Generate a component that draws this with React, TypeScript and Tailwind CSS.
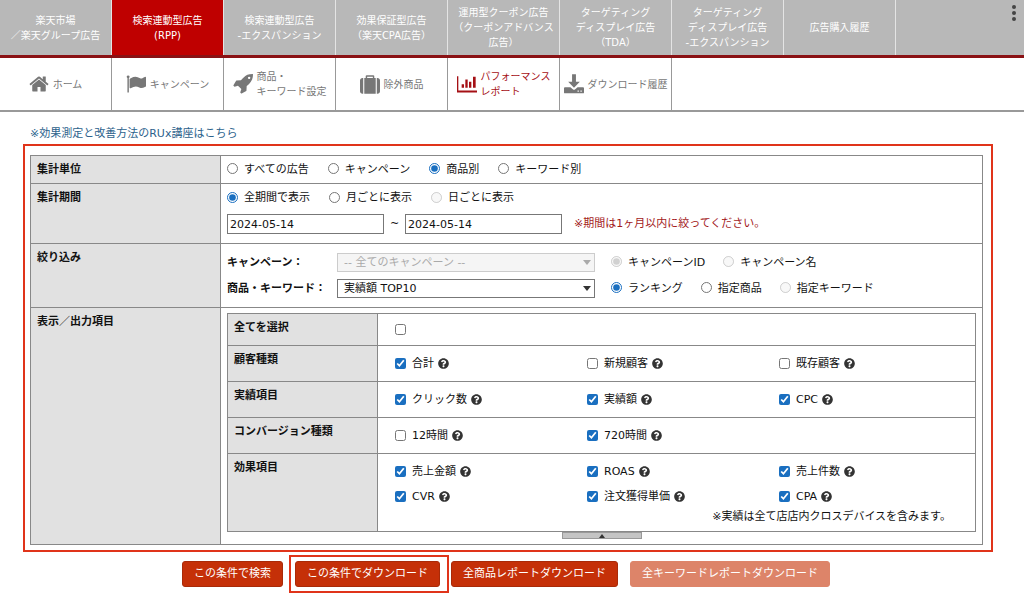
import React, { useState } from 'react';
import { FaQuestionCircle } from 'react-icons/fa';

const HomeIcon = () => (
  <svg viewBox="0 128 1664 1536" className="h-[18px] w-5 shrink-0" fill="currentColor">
    <path d="M1408 992v480q0 26-19 45t-45 19h-384v-384h-256v384h-384q-26 0-45-19t-19-45v-480q0-1 .5-3t.5-3l575-474 575 474q1 2 1 6zm223-69l-62 74q-8 9-21 11h-3q-13 0-21-7l-692-577-692 577q-12 8-24 7-13-2-21-11l-62-74q-8-10-7-23.5t11-21.5l719-599q32-26 76-26t76 26l244 204v-195q0-14 9-23t23-9h192q14 0 23 9t9 23v408l219 182q10 8 11 21.5t-7 23.5z" />
  </svg>
);

const FlagIcon = () => (
  <svg viewBox="0 0 1792 1792" className="size-5 shrink-0" fill="currentColor">
    <path d="M320 256q0 72-64 110v1266q0 13-9.5 22.5t-22.5 9.5h-64q-13 0-22.5-9.5t-9.5-22.5v-1266q-64-38-64-110 0-53 37.5-90.5t90.5-37.5 90.5 37.5 37.5 90.5zm1472 64v763q0 25-12.5 38.5t-39.5 27.5q-215 116-369 116-61 0-123.5-22t-108.5-48-115.5-48-142.5-22q-192 0-464 146-17 9-33 9-26 0-45-19t-19-45v-742q0-32 31-55 21-14 79-43 236-120 421-120 107 0 200 29t219 88q38 19 88 19 54 0 117.5-21t110-47 88-47 54.5-21q26 0 45 19t19 45z" />
  </svg>
);

const RocketIcon = () => (
  <svg viewBox="0 128 1664 1664" className="size-5 shrink-0" fill="currentColor">
    <path d="M1440 448q0-40-28-68t-68-28-68 28-28 68 28 68 68 28 68-28 28-68zm224-288q0 249-75.5 430.5t-253.5 360.5q-81 80-195 176l-20 379q-2 16-16 26l-384 224q-7 4-16 4-12 0-23-9l-64-64q-13-14-8-32l85-276-281-281-276 85q-3 1-9 1-14 0-23-9l-64-64q-17-19-5-39l224-384q10-14 26-16l379-20q96-114 176-195 188-187 358-258t431-71q14 0 24 9.5t10 22.5z" />
  </svg>
);

const SuitcaseIcon = () => (
  <svg viewBox="0 0 1792 1664" className="h-[19px] w-5 shrink-0" fill="currentColor">
    <path d="M640 256h512v-128h-512v128zm-352 0v1408h-64q-92 0-158-66t-66-158v-960q0-92 66-158t158-66h64zm1120 0v1408h-1024v-1408h128v-160q0-40 28-68t68-28h576q40 0 68 28t28 68v160h128zm384 224v960q0 92-66 158t-158 66h-64v-1408h64q92 0 158 66t66 158z" />
  </svg>
);

const ChartIcon = () => (
  <svg viewBox="0 0 60 50" className="h-[17px] w-5 shrink-0" fill="currentColor">
    <path d="M0 0h4v43h56v6H0zM14 24h7v11h-7zM25 10h7v25h-7zM36 17h7v18h-7zM48 2h8v33h-8z" />
  </svg>
);

const DownloadIcon = () => (
  <svg viewBox="0 0 62 60" className="size-5 shrink-0" fill="currentColor">
    <path d="M25 0h12v23h12L31 42 13 23h12z" />
    <path
      fillRule="evenodd"
      d="M3 40h17l8 7q3 2 6 0l8-7h17q3 0 3 3v13q0 3-3 3H3q-3 0-3-3V43q0-3 3-3zM42 50v4h4v-4zM51 50v4h4v-4z"
    />
  </svg>
);

const adTabs = [
  { lines: ['楽天市場', '／楽天グループ広告'] },
  { lines: ['検索連動型広告', '(RPP)'], active: true },
  { lines: ['検索連動型広告', '-エクスパンション'] },
  { lines: ['効果保証型広告', '（楽天CPA広告）'] },
  { lines: ['運用型クーポン広告', '（クーポンアドバンス', '広告）'] },
  { lines: ['ターゲティング', 'ディスプレイ広告', '（TDA）'] },
  { lines: ['ターゲティング', 'ディスプレイ広告', '-エクスパンション'] },
  { lines: ['広告購入履歴'] },
];

const menuItems = [
  { icon: HomeIcon, lines: ['ホーム'] },
  { icon: FlagIcon, lines: ['キャンペーン'] },
  { icon: RocketIcon, lines: ['商品・', 'キーワード設定'] },
  { icon: SuitcaseIcon, lines: ['除外商品'] },
  { icon: ChartIcon, lines: ['パフォーマンス', 'レポート'], active: true },
  { icon: DownloadIcon, lines: ['ダウンロード履歴'] },
];

const outputGroups = [
  {
    title: '顧客種類',
    items: [
      { label: '合計', checked: true },
      { label: '新規顧客', checked: false },
      { label: '既存顧客', checked: false },
    ],
  },
  {
    title: '実績項目',
    items: [
      { label: 'クリック数', checked: true },
      { label: '実績額', checked: true },
      { label: 'CPC', checked: true },
    ],
  },
  {
    title: 'コンバージョン種類',
    items: [
      { label: '12時間', checked: false },
      { label: '720時間', checked: true },
    ],
  },
  {
    title: '効果項目',
    items: [
      { label: '売上金額', checked: true },
      { label: 'ROAS', checked: true },
      { label: '売上件数', checked: true },
      { label: 'CVR', checked: true },
      { label: '注文獲得単価', checked: true },
      { label: 'CPA', checked: true },
    ],
    note: '※実績は全て店店内クロスデバイスを含みます。',
  },
];

const Radio = ({ name, label, checked, disabled }: any) => (
  <label className="flex items-center gap-1.5 whitespace-nowrap">
    <input
      type="radio"
      name={name}
      defaultChecked={checked}
      disabled={disabled}
      className="mb-0.5 size-[11px] accent-[#1a6fc0]"
    />
    {label}
  </label>
);

const Check = ({ label, checked }: any) => (
  <div className="flex items-center gap-1">
    <label className="flex items-center gap-1.5 whitespace-nowrap">
      <input type="checkbox" defaultChecked={checked} className="mb-0.5 size-[11px] accent-[#1a6fc0]" />
      {label}
    </label>
    <FaQuestionCircle className="mb-0.5 size-[11px] text-[#333]" />
  </div>
);

const Select = ({ label, option, disabled }: any) => (
  <div className="relative w-[258px]">
    <select
      aria-label={label}
      disabled={disabled}
      className="block h-[19px] w-full appearance-none border border-[#777] bg-white pl-1.5 leading-4 disabled:border-[#ccc] disabled:bg-[#f5f5f5] disabled:text-[#aaa]"
    >
      <option>{option}</option>
    </select>
    <svg
      viewBox="0 0 8 5"
      className={`pointer-events-none absolute right-1 top-[7px] h-[5px] w-2 ${disabled ? 'text-[#aaa]' : 'text-[#333]'}`}
    >
      <path d="M0 0h8L4 5z" fill="currentColor" />
    </svg>
  </div>
);

const HeadCell = ({ children }: any) => (
  <th scope="row" className="w-[190px] border border-[#888] bg-[#e1e1e1] px-1.5 pb-[5px] pt-1.5 text-left align-top font-bold">
    {children}
  </th>
);

const ActionButton = ({ children, disabled }: any) => (
  <button
    type="button"
    disabled={disabled}
    className="h-[26px] whitespace-nowrap rounded-[3px] border border-[#a92a08] bg-[#c53008] px-[11px] text-white disabled:border-[#dd8469] disabled:bg-[#dd8469]"
  >
    {children}
  </button>
);

export default function App() {
  const [from, setFrom] = useState('2024-05-14');
  const [to, setTo] = useState('2024-05-14');
  const [open, setOpen] = useState(true);

  return (
    <div className="bg-white font-['DejaVu_Sans','Noto_Sans_CJK_JP',sans-serif] text-[11px] leading-4 text-[#111]">
      {/* Ad type tabs */}
      <header className="flex h-[58px] border-b-3 border-[#8a1114] bg-[#b8b8b8] text-[10px] leading-[15px] text-white">
        <nav className="flex">
          {adTabs.map((tab, i) => (
            <a
              key={i}
              href="#"
              className={`flex w-28 flex-col items-center justify-center whitespace-nowrap border-r border-[#e4e4e4] ${tab.active ? 'bg-[#bf0000]' : ''}`}
            >
              {tab.lines.map((line) => (
                <span key={line}>{line}</span>
              ))}
            </a>
          ))}
        </nav>
        <button type="button" aria-label="メニュー" className="ml-auto flex flex-col items-center gap-0.5 self-start px-2 pt-[5px]">
          <span className="size-1 rounded-full bg-[#444]" />
          <span className="size-1 rounded-full bg-[#444]" />
          <span className="size-1 rounded-full bg-[#444]" />
        </button>
      </header>

      {/* RPP menu */}
      <nav className="flex h-[54px] border-b-2 border-[#999] text-[10px] leading-[15px]">
        {menuItems.map(({ icon: Icon, lines, active }) => (
          <a
            key={lines[0]}
            href="#"
            className={`flex w-28 items-center justify-center gap-1 whitespace-nowrap border-r border-[#999] ${active ? 'text-[#a51015]' : 'text-[#777]'}`}
          >
            <Icon />
            <span className="flex flex-col">
              {lines.map((line) => (
                <span key={line}>{line}</span>
              ))}
            </span>
          </a>
        ))}
      </nav>

      <main className="pl-[23px] pr-[31px] pt-3.5">
        <a href="#" className="ml-[7px] block w-fit text-[#2c628c]">
          ※効果測定と改善方法のRUx講座はこちら
        </a>

        {/* Report conditions */}
        <section className="mt-0.5 border-2 border-[#e0341a] pb-[5px] pl-[5px] pr-2 pt-[9px]">
          <table className="w-full table-fixed border-collapse">
            <tbody>
              <tr>
                <HeadCell>集計単位</HeadCell>
                <td className="border border-[#888] px-1.5">
                  <div className="flex gap-[19px]">
                    <Radio name="unit" label="すべての広告" />
                    <Radio name="unit" label="キャンペーン" />
                    <Radio name="unit" label="商品別" checked />
                    <Radio name="unit" label="キーワード別" />
                  </div>
                </td>
              </tr>
              <tr>
                <HeadCell>集計期間</HeadCell>
                <td className="border border-[#888] px-1.5 pb-[9px] pt-1.5">
                  <div className="flex gap-[19px]">
                    <Radio name="period" label="全期間で表示" checked />
                    <Radio name="period" label="月ごとに表示" />
                    <Radio name="period" label="日ごとに表示" disabled />
                  </div>
                  <div className="mt-2 flex items-center">
                    <input
                      type="text"
                      aria-label="開始日"
                      value={from}
                      onChange={(e) => setFrom(e.target.value)}
                      className="h-5 w-[157px] border border-[#777] px-0.5"
                    />
                    <span className="w-[21px] text-center">~</span>
                    <input
                      type="text"
                      aria-label="終了日"
                      value={to}
                      onChange={(e) => setTo(e.target.value)}
                      className="h-5 w-[157px] border border-[#777] px-0.5"
                    />
                    <span className="ml-3 text-[#a3191b]">※期間は1ヶ月以内に絞ってください。</span>
                  </div>
                </td>
              </tr>
              <tr>
                <HeadCell>絞り込み</HeadCell>
                <td className="border border-[#888] px-1.5 py-[9px]">
                  <div className="flex items-center">
                    <span className="w-[110px] font-bold">キャンペーン：</span>
                    <Select label="キャンペーン" option="-- 全てのキャンペーン --" disabled />
                    <div className="ml-4 flex gap-[18px]">
                      <Radio name="campaign" label="キャンペーンID" checked disabled />
                      <Radio name="campaign" label="キャンペーン名" disabled />
                    </div>
                  </div>
                  <div className="mt-[7px] flex items-center">
                    <span className="w-[110px] font-bold">商品・キーワード：</span>
                    <Select label="商品・キーワード" option="実績額 TOP10" />
                    <div className="ml-4 flex gap-[18px]">
                      <Radio name="item" label="ランキング" checked />
                      <Radio name="item" label="指定商品" />
                      <Radio name="item" label="指定キーワード" disabled />
                    </div>
                  </div>
                </td>
              </tr>
              <tr>
                <HeadCell>表示／出力項目</HeadCell>
                <td className="border border-[#888] px-1.5 py-[5px]">
                  {open && (
                    <table className="w-full table-fixed border-collapse">
                      <tbody>
                        <tr>
                          <th scope="row" className="h-8 w-[150px] border border-[#888] bg-[#e1e1e1] px-1.5 pt-1.5 text-left align-top font-bold">
                            全てを選択
                          </th>
                          <td className="border border-[#888] px-[17px]">
                            <input type="checkbox" aria-label="全てを選択" className="block size-[11px] accent-[#1a6fc0]" />
                          </td>
                        </tr>
                        {outputGroups.map((group) => (
                          <tr key={group.title}>
                            <th scope="row" className="border border-[#888] bg-[#e1e1e1] px-1.5 pt-1.5 text-left align-top font-bold">
                              {group.title}
                            </th>
                            <td className={`border border-[#888] pl-[17px] pt-2.5 ${group.note ? 'pb-1.5' : 'pb-[9px]'}`}>
                              <div className="grid grid-cols-[192px_192px_1fr] gap-y-[9px]">
                                {group.items.map((item) => (
                                  <Check key={item.label} label={item.label} checked={item.checked} />
                                ))}
                              </div>
                              {group.note && <p className="mt-1 pr-6 text-right">{group.note}</p>}
                            </td>
                          </tr>
                        ))}
                      </tbody>
                    </table>
                  )}
                  <button
                    type="button"
                    aria-label="表示項目の開閉"
                    onClick={() => setOpen(!open)}
                    className="mx-auto flex h-[7px] w-20 items-center justify-center border border-[#999] bg-[#c4c4c4]"
                  >
                    <svg viewBox="0 0 6 4" className="h-1 w-1.5">
                      <path d="M0 4h6L3 0z" fill="#333" />
                    </svg>
                  </button>
                </td>
              </tr>
            </tbody>
          </table>
        </section>

        {/* Actions */}
        <div className="mt-[3px] flex items-center justify-center pr-1">
          <ActionButton>この条件で検索</ActionButton>
          <div className="ml-1.5 mr-0.5 border-2 border-[#e0341a] py-1 pl-1 pr-[7px]">
            <ActionButton>この条件でダウンロード</ActionButton>
          </div>
          <ActionButton>全商品レポートダウンロード</ActionButton>
          <div className="ml-3">
            <ActionButton disabled>全キーワードレポートダウンロード</ActionButton>
          </div>
        </div>
      </main>
    </div>
  );
}
